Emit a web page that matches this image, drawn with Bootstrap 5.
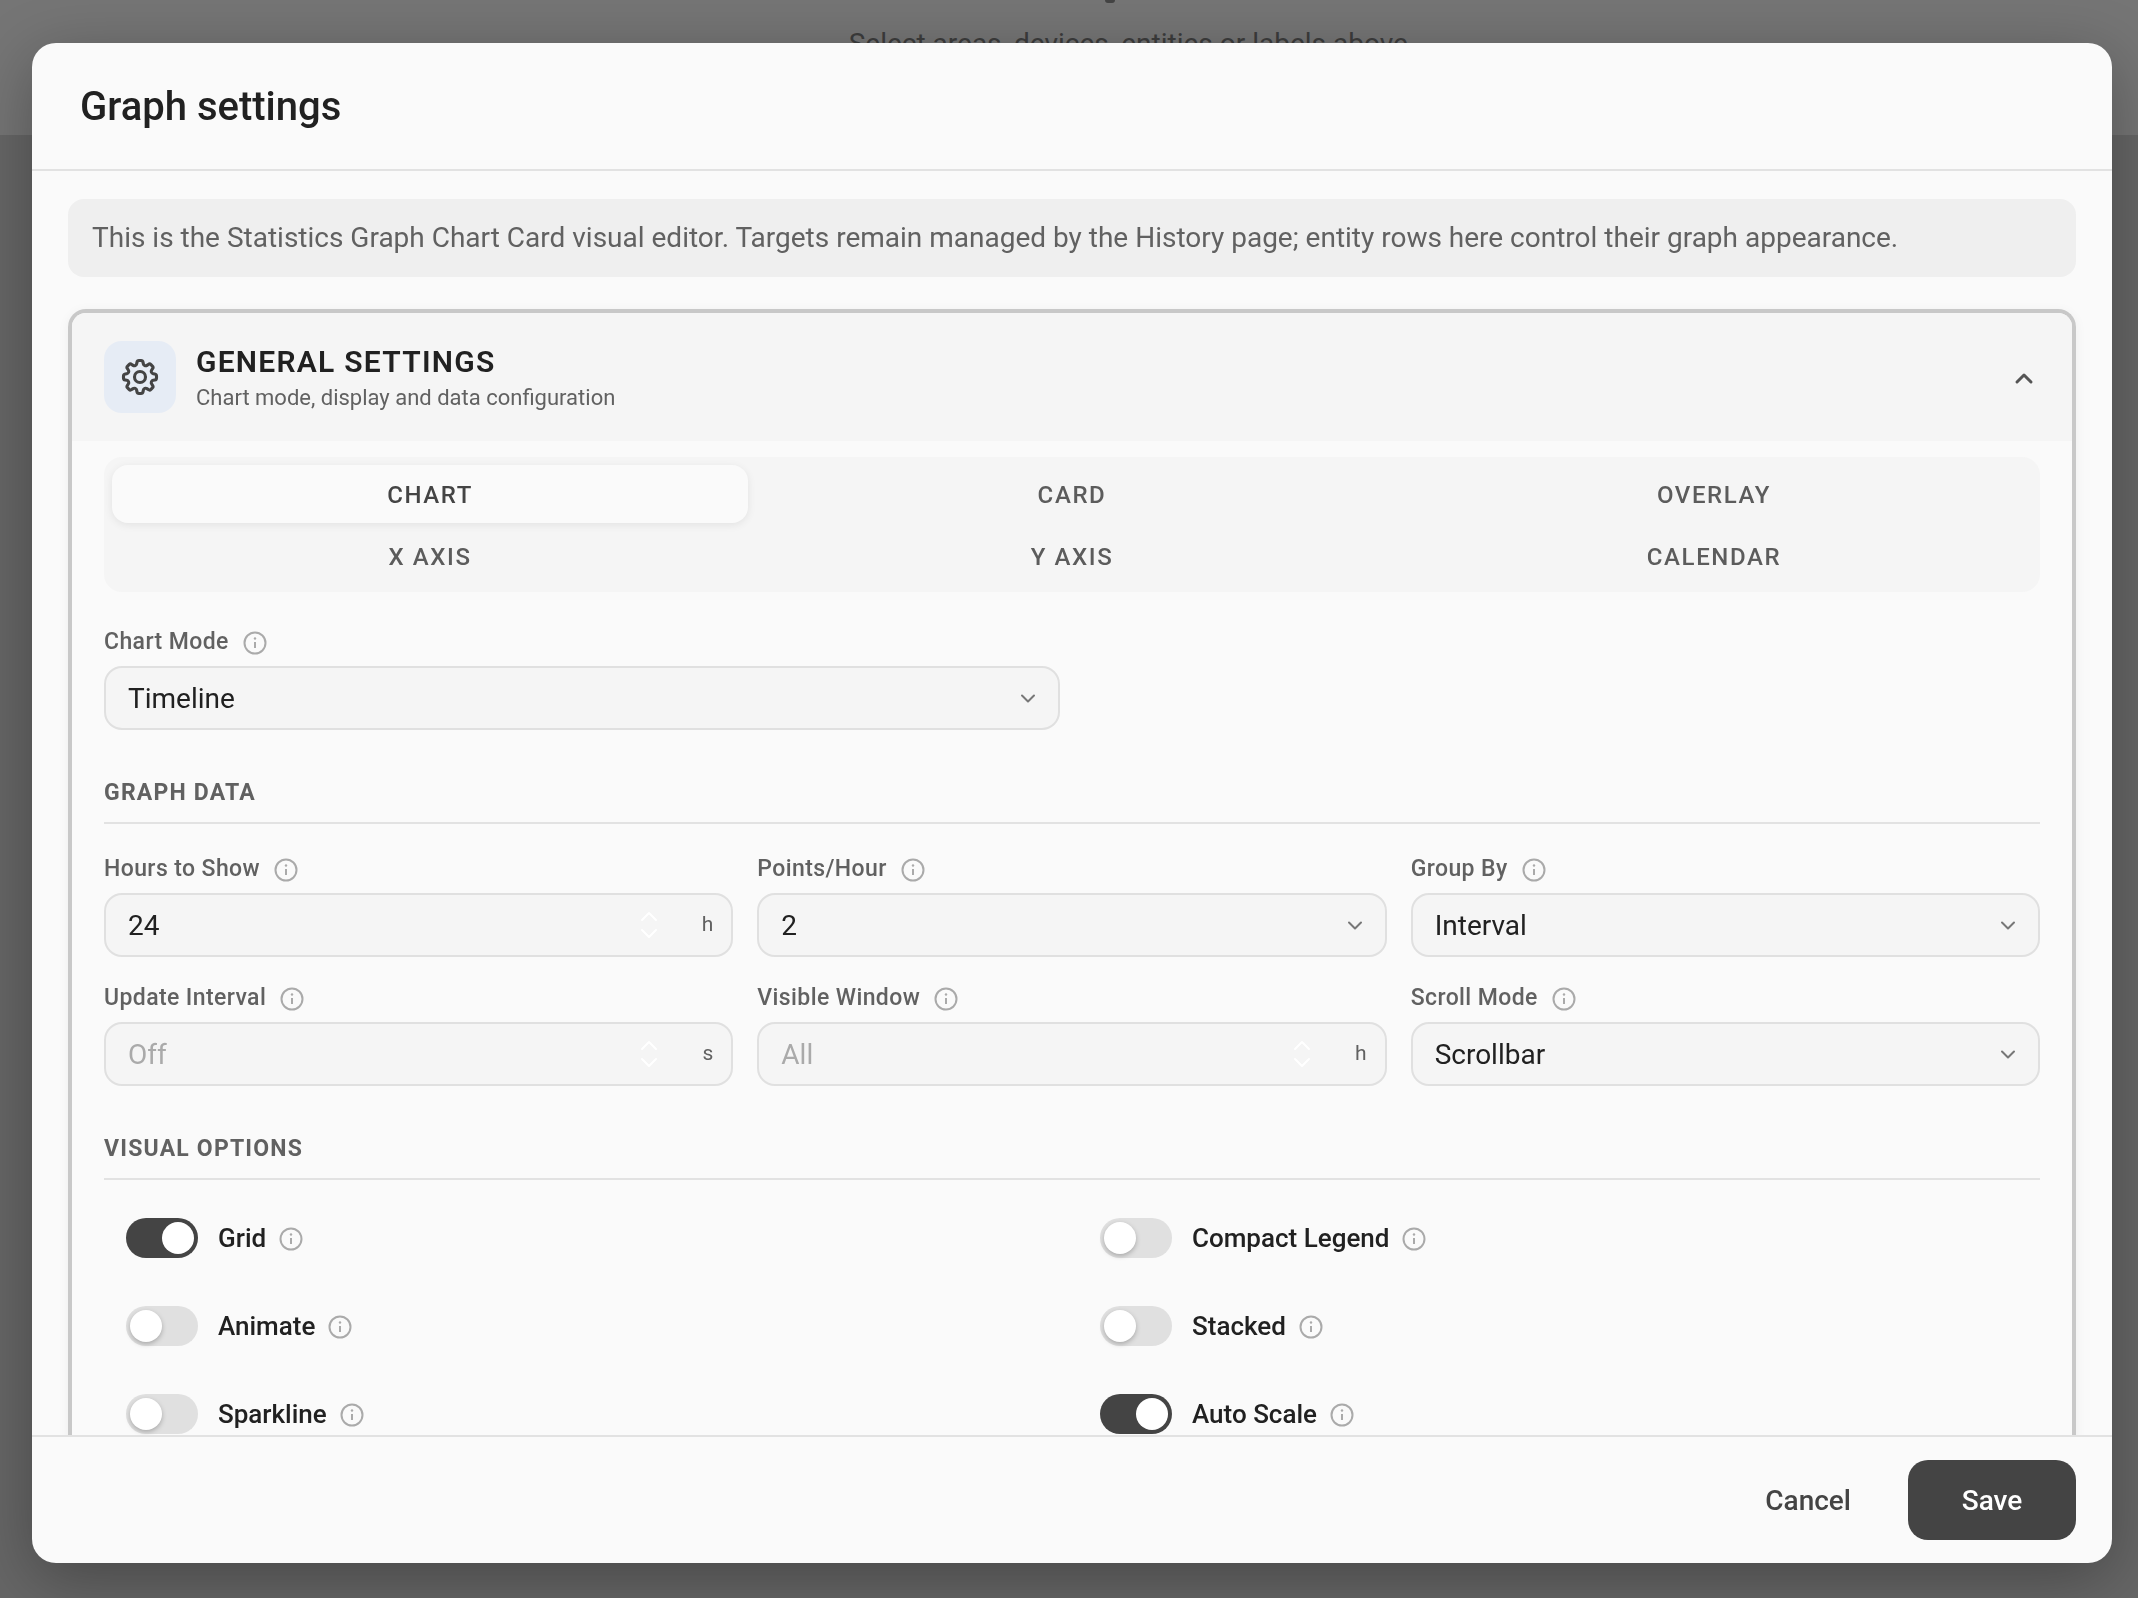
<!DOCTYPE html>
<html lang="en">
<head>
    <meta charset="UTF-8">
    <meta name="viewport" content="width=device-width, initial-scale=1.0">
    <title>Graph settings</title>
    <link href="https://cdn.jsdelivr.net/npm/bootstrap@5.3.0/dist/css/bootstrap.min.css" rel="stylesheet">
    <style>
        html, body { height: 100%; }
        body {
            background: #666;
            font-family: Roboto, "Liberation Sans", sans-serif;
            overflow: hidden;
        }

        /* page behind the dialog */
        .page-top {
            height: 135px;
            background: #757575;
            color: #3c3c3c;
            font-size: 28px;
            text-align: center;
        }
        .page-dot { width: 10px; height: 3px; margin-left: 1105px; margin-bottom: 25px; background: #444; border-radius: 0 0 5px 5px; }
        .page-hint { padding-left: 126px; line-height: 32px; }

        .dialog-wrap {
            position: fixed;
            inset: 0;
            padding: 43px 26px 35px 32px;
        }
        .dialog-box.modal-content {
            height: 100%;
            background: #fafafa;
            border: 0;
            border-radius: 24px;
            box-shadow: 0 16px 64px rgba(0, 0, 0, .3);
            overflow: hidden;
        }
        .dialog-box .modal-header {
            height: 128px;
            flex: none;
            padding: 2px 48px 0;
            border-bottom: 2px solid #e2e2e2;
            border-radius: 0;
        }
        .dialog-title { font-size: 40px; font-weight: 500; color: #212121; margin: 0; }
        .dialog-box .modal-body {
            padding: 28px 36px 0;
            overflow: hidden;
            min-height: 0;
        }
        .dialog-box .modal-footer {
            height: 128px;
            flex: none;
            padding: 0 36px;
            border-top: 2px solid #e2e2e2;
            border-radius: 0;
            gap: 33px;
        }

        .intro-note {
            height: 78px;
            padding: 0 24px;
            background: #efefef;
            border-radius: 16px;
            color: #616161;
            font-size: 28px;
            display: flex;
            align-items: center;
        }

        .section-box {
            margin-top: 32px;
            border: 4px solid #c8c8c8;
            border-bottom: 0;
            border-radius: 18px 18px 0 0;
            box-shadow: 0 2px 12px rgba(0, 0, 0, .05);
        }
        .section-head {
            height: 128px;
            padding: 0 36px 0 32px;
            background: #f5f5f5;
            border-radius: 14px 14px 0 0;
        }
        .section-icon {
            width: 72px;
            height: 72px;
            margin-right: 20px;
            background: #e6ecf5;
            border-radius: 18px;
            color: #444;
        }
        .section-name { font-size: 30px; font-weight: 600; letter-spacing: 1.25px; color: #212121; line-height: 38px; }
        .section-sub { font-size: 22px; color: #616161; line-height: 30px; margin-top: 2px; }
        .section-text { padding-top: 2px; }
        .section-chevron { margin-top: 2px; }
        .section-main { padding: 16px 32px 48px; }

        .tab-strip {
            display: grid;
            grid-template-columns: repeat(3, 1fr);
            gap: 4px 6px;
            padding: 8px 8px 7px;
            background: #f5f5f5;
            border-radius: 18px;
        }
        .tab-item {
            height: 58px;
            padding-top: 2px;
            border-radius: 16px;
            font-size: 24px;
            font-weight: 500;
            letter-spacing: 1.6px;
            color: #5c5c5c;
            display: flex;
            align-items: center;
            justify-content: center;
        }
        .tab-item.is-active {
            background: #fafafa;
            color: #444;
            box-shadow: 0 2px 8px rgba(0, 0, 0, .08);
        }

        .field-label {
            height: 32px;
            margin-bottom: 8px;
            font-size: 23px;
            font-weight: 500;
            letter-spacing: .4px;
            color: #616161;
            display: flex;
            align-items: center;
            gap: 14px;
        }
        .hint-icon { width: 24px; height: 24px; color: #aaa; flex: none; margin-top: 1px; }

        .mode-field { width: 956px; margin-top: 34px; }

        .group-title {
            margin-top: 47px;
            height: 47px;
            border-bottom: 2px solid #e2e2e2;
            font-size: 23px;
            font-weight: 700;
            letter-spacing: 1.2px;
            line-height: 32px;
            color: #616161;
        }

        .field-grid {
            display: grid;
            grid-template-columns: repeat(3, 1fr);
            gap: 25px 24px;
            margin-top: 29px;
        }

        .value-select.form-select {
            height: 64px;
            padding: 2px 22px 0;
            background-color: #f5f5f5;
            background-position: right 19px center;
            background-size: 22px 22px;
            background-image: url("data:image/svg+xml,%3csvg xmlns='http://www.w3.org/2000/svg' viewBox='0 0 22 22'%3e%3cpath fill='none' stroke='%23777' stroke-width='2' stroke-linecap='round' stroke-linejoin='round' d='M5 8.5l6 6 6-6'/%3e%3c/svg%3e");
            border: 2px solid #e0e0e0;
            border-radius: 18px;
            font-size: 28px;
            color: #212121;
        }
        .number-shell {
            height: 64px;
            padding: 0 18px 0 22px;
            background: #f5f5f5;
            border: 2px solid #e0e0e0;
            border-radius: 18px;
        }
        .number-text {
            flex: 1;
            padding-top: 2px;
            font-size: 28px;
            color: #212121;
        }
        .number-text.is-empty { color: #aaa; }
        .spin-arrows { width: 22px; height: 32px; color: #fff; margin-right: 42px; }
        .unit-text { font-size: 21px; color: #616161; }

        .toggle-grid {
            display: grid;
            grid-template-columns: repeat(2, 1fr);
            gap: 48px 12px;
            padding-top: 38px;
        }
        .toggle-row { height: 40px; padding-left: 22px; gap: 20px; font-size: 26px; font-weight: 500; color: #212121; }
        .toggle-track {
            width: 72px;
            height: 40px;
            padding: 4px;
            border-radius: 20px;
            background: #e0e0e0;
            display: flex;
            flex: none;
        }
        .toggle-track.is-on { background: #444; justify-content: flex-end; }
        .toggle-knob {
            width: 32px;
            height: 32px;
            border-radius: 50%;
            background: #fff;
            box-shadow: 0 2px 5px rgba(0, 0, 0, .25);
        }
        .toggle-track.is-on .toggle-knob { box-shadow: none; }
        .toggle-row .hint-icon { margin-left: -7px; margin-top: 2px; }

        .btn-plain {
            font-size: 28px;
            font-weight: 500;
            color: #444;
            border: 0;
            padding: 2px 24px 0;
            height: 80px;
        }
        .btn-save {
            width: 168px;
            height: 80px;
            padding: 2px 0 0;
            background: #444;
            color: #fff;
            font-size: 28px;
            font-weight: 500;
            border: 0;
            border-radius: 20px;
        }
    </style>
</head>
<body>

<svg width="0" height="0" class="d-block">
    <symbol id="hint" viewBox="0 0 24 24">
        <circle cx="12" cy="12" r="10.5" fill="none" stroke="currentColor" stroke-width="2"/>
        <path d="M12 11v6" fill="none" stroke="currentColor" stroke-width="2"/>
        <circle cx="12" cy="7.5" r="1.2" fill="currentColor"/>
    </symbol>
    <symbol id="spin" viewBox="0 0 22 32">
        <path d="M4 11l7-7 7 7M4 21l7 7 7-7" fill="none" stroke="currentColor" stroke-width="2" stroke-linecap="round" stroke-linejoin="round"/>
    </symbol>
</svg>

<div class="page-top">
    <div class="page-dot"></div>
    <div class="page-hint">Select areas, devices, entities or labels above.</div>
</div>

<div class="dialog-wrap">
    <div class="modal-content dialog-box">
        <div class="modal-header">
            <h5 class="dialog-title">Graph settings</h5>
        </div>
        <div class="modal-body">
            <div class="intro-note">This is the Statistics Graph Chart Card visual editor. Targets remain managed by the History page; entity rows here control their graph appearance.</div>

            <div class="section-box">
                <div class="section-head d-flex align-items-center">
                    <div class="section-icon d-flex align-items-center justify-content-center">
                        <svg width="44" height="44" viewBox="0 0 24 24" fill="none" stroke="currentColor" stroke-width="1.7" stroke-linecap="round" stroke-linejoin="round">
                            <path d="M10.343 3.94c.09-.542.56-.94 1.11-.94h1.093c.55 0 1.02.398 1.11.94l.149.894c.07.424.384.764.78.93.398.164.855.142 1.205-.108l.737-.527a1.125 1.125 0 011.45.12l.773.774c.39.389.44 1.002.12 1.45l-.527.737c-.25.35-.272.806-.107 1.204.165.397.505.71.93.78l.893.15c.543.09.94.56.94 1.109v1.094c0 .55-.397 1.02-.94 1.11l-.893.149c-.425.07-.765.383-.93.78-.165.398-.143.854.107 1.204l.527.738c.32.447.269 1.06-.12 1.45l-.774.773a1.125 1.125 0 01-1.449.12l-.738-.527c-.35-.25-.806-.272-1.203-.107-.397.165-.71.505-.781.929l-.149.894c-.09.542-.56.94-1.11.94h-1.094c-.55 0-1.019-.398-1.11-.94l-.148-.894c-.071-.424-.384-.764-.781-.93-.398-.164-.854-.142-1.204.108l-.738.527c-.447.32-1.06.269-1.45-.12l-.773-.774a1.125 1.125 0 01-.12-1.45l.527-.737c.25-.35.273-.806.108-1.204-.165-.397-.505-.71-.93-.78l-.894-.15c-.542-.09-.94-.56-.94-1.109v-1.094c0-.55.398-1.02.94-1.11l.894-.149c.424-.07.765-.383.93-.78.165-.398.143-.854-.107-1.204l-.527-.738a1.125 1.125 0 01.12-1.45l.773-.773a1.125 1.125 0 011.45-.12l.737.527c.35.25.807.272 1.204.107.397-.165.71-.505.78-.929l.15-.894z"/>
                            <circle cx="12" cy="12" r="3"/>
                        </svg>
                    </div>
                    <div class="section-text flex-grow-1">
                        <div class="section-name">GENERAL SETTINGS</div>
                        <div class="section-sub">Chart mode, display and data configuration</div>
                    </div>
                    <svg class="section-chevron" width="24" height="24" viewBox="0 0 24 24" fill="none" stroke="#555" stroke-width="3" stroke-linecap="round" stroke-linejoin="round">
                        <path d="M5 16l7-7 7 7"/>
                    </svg>
                </div>

                <div class="section-main">
                    <div class="tab-strip">
                        <div class="tab-item is-active">CHART</div>
                        <div class="tab-item">CARD</div>
                        <div class="tab-item">OVERLAY</div>
                        <div class="tab-item">X AXIS</div>
                        <div class="tab-item">Y AXIS</div>
                        <div class="tab-item">CALENDAR</div>
                    </div>

                    <div class="mode-field">
                        <div class="field-label">Chart Mode <svg class="hint-icon"><use href="#hint"/></svg></div>
                        <select class="form-select value-select"><option>Timeline</option></select>
                    </div>

                    <div class="group-title">GRAPH DATA</div>
                    <div class="field-grid">
                        <div>
                            <div class="field-label">Hours to Show <svg class="hint-icon"><use href="#hint"/></svg></div>
                            <div class="number-shell d-flex align-items-center">
                                <span class="number-text">24</span>
                                <svg class="spin-arrows"><use href="#spin"/></svg>
                                <span class="unit-text">h</span>
                            </div>
                        </div>
                        <div>
                            <div class="field-label">Points/Hour <svg class="hint-icon"><use href="#hint"/></svg></div>
                            <select class="form-select value-select"><option>2</option></select>
                        </div>
                        <div>
                            <div class="field-label">Group By <svg class="hint-icon"><use href="#hint"/></svg></div>
                            <select class="form-select value-select"><option>Interval</option></select>
                        </div>
                        <div>
                            <div class="field-label">Update Interval <svg class="hint-icon"><use href="#hint"/></svg></div>
                            <div class="number-shell d-flex align-items-center">
                                <span class="number-text is-empty">Off</span>
                                <svg class="spin-arrows"><use href="#spin"/></svg>
                                <span class="unit-text">s</span>
                            </div>
                        </div>
                        <div>
                            <div class="field-label">Visible Window <svg class="hint-icon"><use href="#hint"/></svg></div>
                            <div class="number-shell d-flex align-items-center">
                                <span class="number-text is-empty">All</span>
                                <svg class="spin-arrows"><use href="#spin"/></svg>
                                <span class="unit-text">h</span>
                            </div>
                        </div>
                        <div>
                            <div class="field-label">Scroll Mode <svg class="hint-icon"><use href="#hint"/></svg></div>
                            <select class="form-select value-select"><option>Scrollbar</option></select>
                        </div>
                    </div>

                    <div class="group-title">VISUAL OPTIONS</div>
                    <div class="toggle-grid">
                        <div class="toggle-row d-flex align-items-center"><span class="toggle-track is-on"><span class="toggle-knob"></span></span>Grid <svg class="hint-icon"><use href="#hint"/></svg></div>
                        <div class="toggle-row d-flex align-items-center"><span class="toggle-track"><span class="toggle-knob"></span></span>Compact Legend <svg class="hint-icon"><use href="#hint"/></svg></div>
                        <div class="toggle-row d-flex align-items-center"><span class="toggle-track"><span class="toggle-knob"></span></span>Animate <svg class="hint-icon"><use href="#hint"/></svg></div>
                        <div class="toggle-row d-flex align-items-center"><span class="toggle-track"><span class="toggle-knob"></span></span>Stacked <svg class="hint-icon"><use href="#hint"/></svg></div>
                        <div class="toggle-row d-flex align-items-center"><span class="toggle-track"><span class="toggle-knob"></span></span>Sparkline <svg class="hint-icon"><use href="#hint"/></svg></div>
                        <div class="toggle-row d-flex align-items-center"><span class="toggle-track is-on"><span class="toggle-knob"></span></span>Auto Scale <svg class="hint-icon"><use href="#hint"/></svg></div>
                    </div>
                </div>
            </div>
        </div>
        <div class="modal-footer">
            <button type="button" class="btn btn-plain">Cancel</button>
            <button type="button" class="btn btn-save">Save</button>
        </div>
    </div>
</div>

<script src="https://cdn.jsdelivr.net/npm/bootstrap@5.3.0/dist/js/bootstrap.bundle.min.js"></script>
</body>
</html>
